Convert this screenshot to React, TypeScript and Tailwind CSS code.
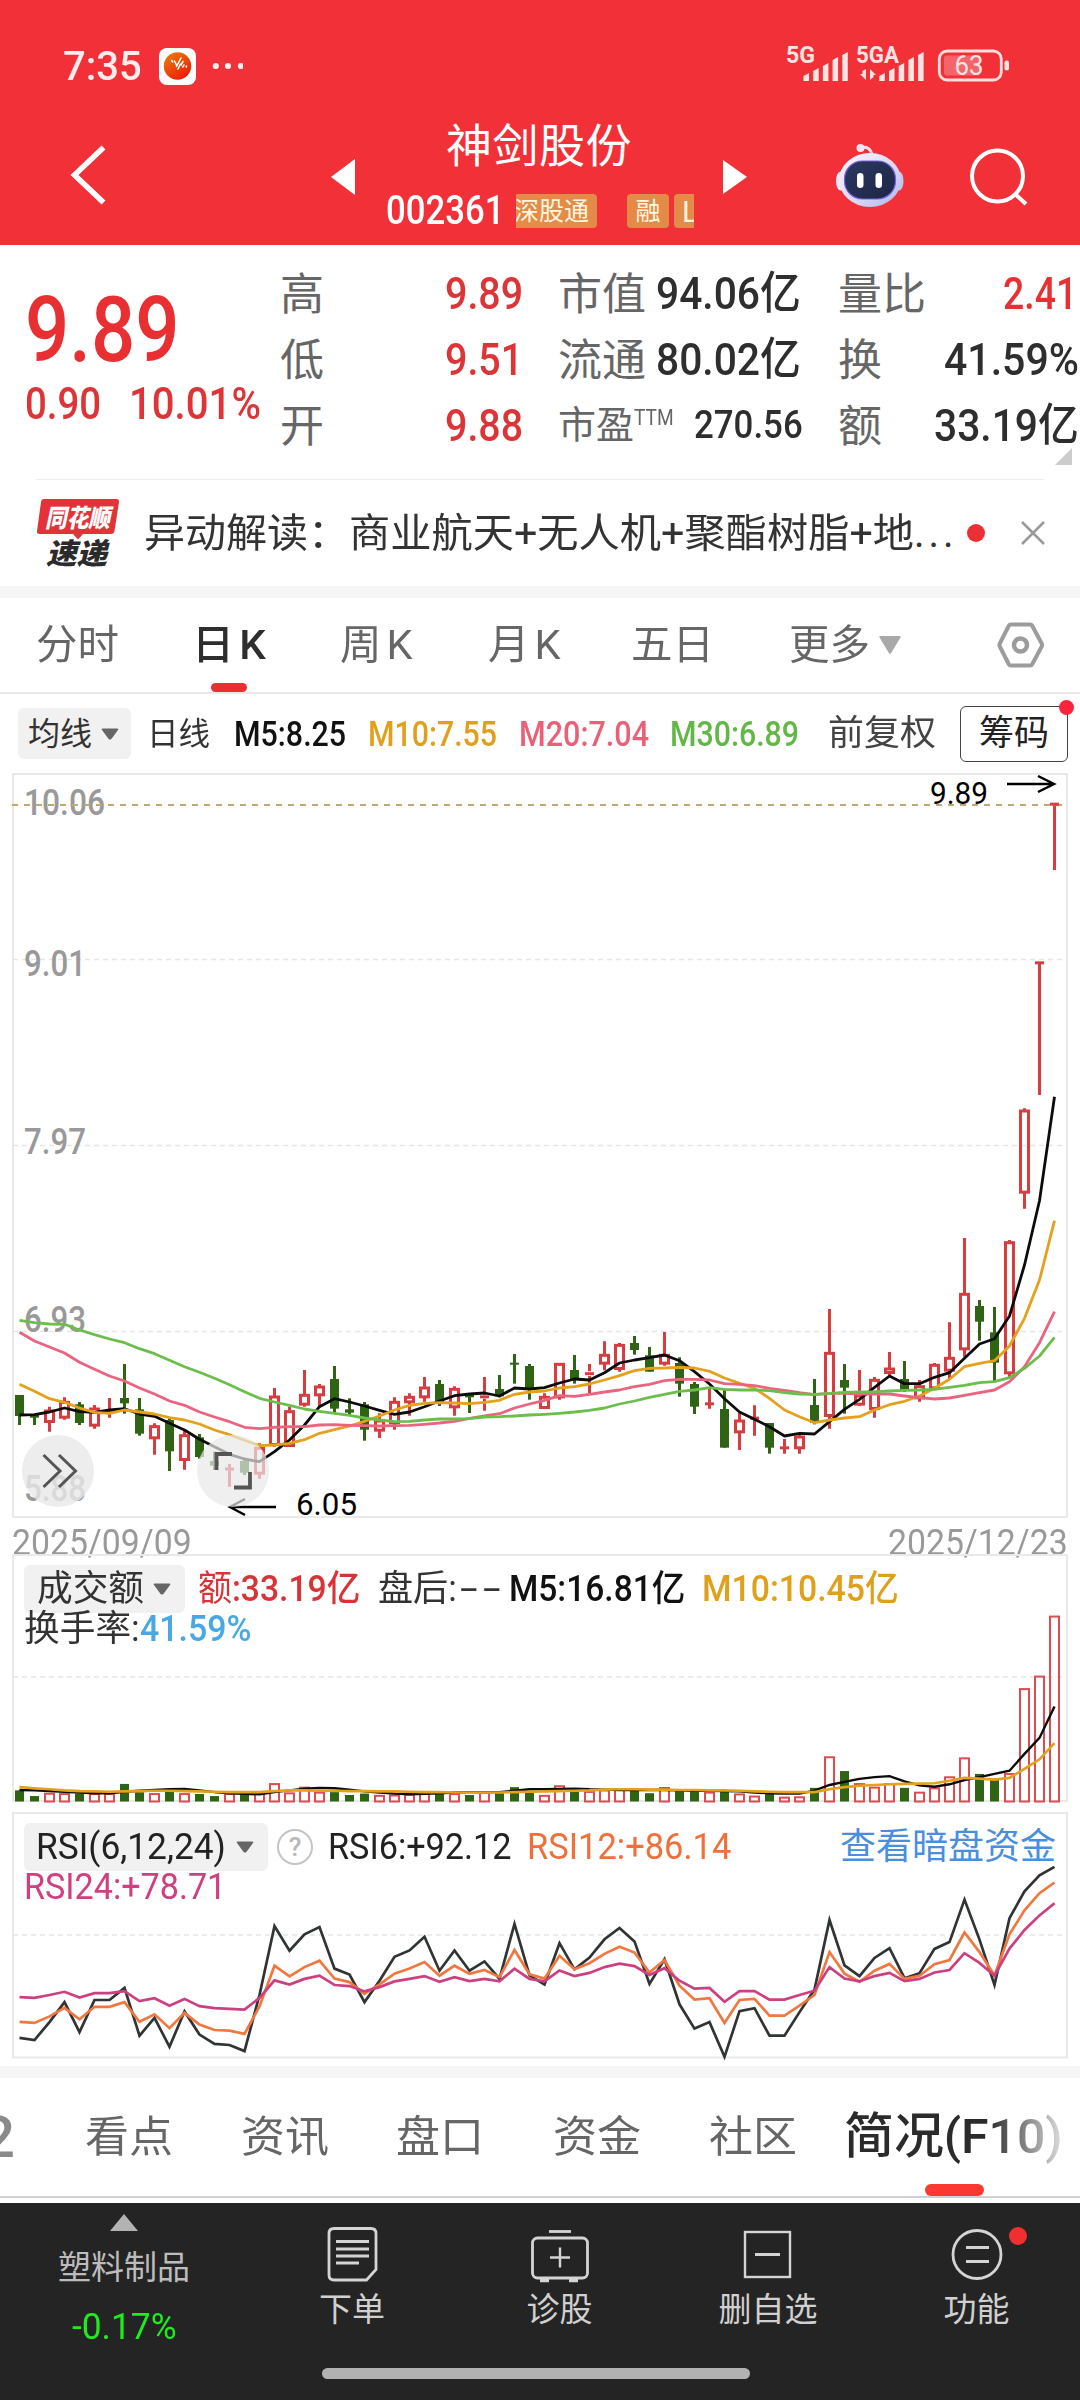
import React, { useLayoutEffect, useRef, useState } from "react";

type Candle = [up: number, high: number, top: number, bottom: number, low: number];

// daily candles, in chart units (3 units per pixel, 0 = y 1280)
const candles: Candle[] = [
  [0, 345, 345, 408, 435], [0, 403, 403, 413, 435], [1, 380, 390, 426, 455], [1, 352, 364, 413, 419],
  [0, 366, 373, 429, 435], [1, 375, 384, 437, 446], [1, 354, 388, 400, 413], [0, 252, 354, 370, 401],
  [0, 354, 388, 461, 467], [1, 430, 437, 475, 524], [0, 414, 420, 514, 573], [1, 450, 464, 540, 569],
  [0, 462, 472, 531, 536], [0, 515, 543, 557, 570], [1, 552, 563, 571, 620], [0, 535, 543, 578, 585],
  [1, 490, 502, 581, 596], [1, 324, 348, 495, 500], [1, 380, 392, 498, 500], [1, 270, 343, 374, 380],
  [1, 312, 318, 346, 378], [0, 258, 297, 386, 398], [0, 355, 388, 398, 404], [0, 366, 373, 449, 482],
  [1, 400, 420, 452, 474], [1, 352, 364, 430, 449], [1, 340, 349, 367, 407], [1, 291, 321, 352, 365],
  [0, 300, 312, 367, 378], [1, 319, 325, 382, 407], [0, 345, 345, 352, 399], [1, 291, 345, 356, 392],
  [0, 285, 327, 349, 352], [0, 222, 248, 254, 311], [0, 252, 258, 326, 359], [1, 340, 349, 384, 386],
  [1, 249, 250, 352, 359], [0, 225, 270, 297, 311], [1, 252, 274, 288, 340], [1, 184, 223, 251, 271],
  [1, 189, 193, 267, 275], [0, 168, 189, 210, 224], [0, 201, 226, 275, 275], [1, 156, 223, 251, 257],
  [0, 232, 249, 311, 350], [0, 306, 312, 380, 402], [1, 325, 368, 375, 386], [0, 330, 387, 503, 503],
  [1, 398, 420, 457, 510], [1, 376, 411, 418, 467], [0, 429, 429, 503, 521], [1, 477, 500, 507, 521],
  [1, 465, 468, 505, 521], [0, 297, 375, 429, 433], [1, 87, 217, 408, 446], [0, 252, 300, 323, 401],
  [1, 270, 345, 374, 377], [1, 291, 298, 387, 413], [1, 216, 264, 279, 287], [0, 243, 297, 330, 336],
  [1, 300, 317, 355, 365], [1, 249, 253, 325, 330], [1, 127, 232, 272, 300], [1, -126, 40, 208, 230],
  [0, 60, 78, 125, 182], [0, 81, 157, 248, 303], [1, -120, -115, 280, 295], [1, -515, -510, -262, -214],
  [1, -955, -955, -948, -555], [1, -1431, -1431, -1424, -1230],
];

const ma5 = [
  405, 404, 396, 384, 395, 397, 390, 386, 402, 409, 430, 450, 478, 500, 523, 537, 545, 515, 480, 435, 380, 356, 366,
  378, 391, 403, 396, 380, 363, 347, 342, 339, 348, 324, 327, 323, 309, 297, 300, 278, 249, 240, 233, 225, 242, 275,
  312, 356, 396, 418, 440, 468, 460, 462, 425, 388, 358, 322, 288, 311, 311, 292, 278, 235, 192, 176, 108, -45, -238, -550,
];
const ma10 = [
  313, 334, 356, 367, 384, 397, 400, 390, 396, 402, 413, 420, 432, 450, 464, 481, 497, 495, 490, 479, 460, 449, 438,
  424, 408, 390, 376, 370, 368, 369, 371, 367, 361, 343, 336, 333, 324, 320, 312, 300, 287, 272, 265, 264, 262, 264,
  274, 294, 310, 325, 355, 390, 410, 428, 420, 414, 410, 390, 374, 364, 348, 325, 298, 260, 250, 242, 198, 115, 0, -178,
];
const ma20 = [
  157, 183, 201, 219, 247, 268, 288, 303, 324, 342, 363, 376, 396, 411, 425, 442, 446, 442, 440, 440, 435, 434, 436,
  437, 438, 437, 436, 433, 429, 424, 415, 408, 401, 384, 372, 361, 347, 349, 343, 336, 330, 320, 313, 302, 298, 298,
  300, 311, 313, 317, 325, 331, 338, 344, 340, 340, 342, 342, 342, 348, 353, 357, 354, 346, 338, 330, 305, 260, 188, 95,
];
const ma30 = [
  121, 128, 132, 133, 150, 164, 177, 188, 206, 221, 241, 260, 277, 295, 314, 335, 355, 366, 376, 387, 394, 400, 406,
  414, 420, 425, 424, 420, 417, 417, 416, 411, 410, 408, 405, 403, 400, 396, 391, 384, 372, 363, 352, 343, 334, 330,
  323, 328, 330, 330, 332, 338, 342, 343, 340, 337, 336, 335, 333, 331, 330, 328, 322, 316, 308, 305, 293, 265, 228, 172,
];

// tops of the turnover bars, 2.8 units per pixel, 0 = y 1520
const volumes = [
  757, 773, 765, 766, 766, 766, 766, 739, 762, 766, 760, 766, 767, 773, 766, 765, 766, 738, 764, 748, 762, 762, 770,
  766, 771, 770, 768, 766, 766, 766, 770, 762, 765, 748, 762, 771, 744, 760, 760, 756, 752, 758, 765, 749, 757, 757,
  762, 760, 767, 773, 765, 776, 775, 750, 663, 703, 738, 748, 738, 750, 762, 750, 719, 666, 711, 724, 710, 472, 437, 269,
];
const vol5 = [
  756, 757, 759, 761, 763, 765, 765, 761, 758, 756, 754, 753, 757, 762, 765, 767, 768, 762, 757, 752, 750, 751, 755,
  760, 763, 766, 768, 767, 765, 763, 762, 762, 762, 758, 754, 754, 753, 752, 754, 755, 756, 756, 756, 756, 757, 758,
  758, 759, 760, 763, 765, 766, 766, 758, 742, 733, 725, 720, 717, 732, 743, 747, 740, 728, 720, 711, 702, 655, 610, 522,
];
const vol10 = [
  748, 751, 754, 757, 759, 760, 761, 760, 759, 758, 758, 759, 760, 761, 762, 762, 762, 759, 757, 757, 758, 758, 759,
  759, 760, 760, 761, 762, 762, 763, 763, 763, 763, 762, 761, 760, 759, 758, 757, 755, 754, 754, 755, 755, 756, 756,
  757, 757, 758, 760, 761, 762, 762, 762, 754, 748, 744, 742, 740, 739, 738, 737, 730, 722, 724, 727, 722, 697, 670, 625,
];

const rsi6 = [
  1450, 1456, 1406, 1350, 1434, 1344, 1344, 1310, 1444, 1394, 1475, 1376, 1441, 1467, 1470, 1487, 1330, 1137, 1206,
  1160, 1140, 1256, 1273, 1350, 1290, 1223, 1205, 1167, 1262, 1205, 1262, 1236, 1285, 1131, 1275, 1301, 1185, 1258,
  1225, 1174, 1142, 1180, 1299, 1230, 1356, 1424, 1406, 1503, 1375, 1367, 1444, 1444, 1378, 1315, 1120, 1247, 1277,
  1226, 1199, 1283, 1269, 1201, 1182, 1063, 1175, 1302, 1115, 1040, 995, 971,
];
const rsi12 = [
  1405, 1408, 1390, 1366, 1398, 1363, 1363, 1350, 1405, 1384, 1423, 1380, 1413, 1428, 1430, 1439, 1362, 1248, 1278,
  1252, 1234, 1284, 1294, 1327, 1300, 1270, 1256, 1238, 1276, 1248, 1271, 1260, 1280, 1204, 1272, 1284, 1220, 1258,
  1241, 1215, 1195, 1211, 1267, 1232, 1304, 1343, 1339, 1408, 1344, 1341, 1388, 1388, 1360, 1330, 1210, 1270, 1293,
  1262, 1243, 1285, 1276, 1244, 1232, 1155, 1210, 1275, 1160, 1093, 1045, 1015,
];
const rsi24 = [
  1336, 1338, 1330, 1321, 1337, 1325, 1325, 1319, 1347, 1339, 1360, 1341, 1361, 1367, 1369, 1371, 1338, 1289, 1301,
  1285, 1276, 1302, 1305, 1320, 1308, 1292, 1285, 1277, 1293, 1280, 1291, 1285, 1292, 1256, 1285, 1292, 1261, 1277,
  1268, 1252, 1242, 1249, 1274, 1255, 1290, 1312, 1310, 1349, 1319, 1319, 1343, 1343, 1330, 1318, 1252, 1284, 1292,
  1277, 1268, 1291, 1285, 1267, 1260, 1213, 1240, 1276, 1200, 1148, 1107, 1073,
];

const RED = "#d63c40";
const GREEN = "#2f6414";

const xAt = (i: number) => 19.5 + i * 15;
const yPrice = (v: number) => 1280 + v / 3;
const ySub = (v: number) => 1520 + v / 2.8;
const line = (data: number[], y: (v: number) => number) =>
  data.map((v, i) => `${xAt(i).toFixed(1)},${y(v).toFixed(1)}`).join(" ");

// squeezes a run of text into the width of its box
function Fit({ className, children }: { className: string; children: React.ReactNode }) {
  const box = useRef<HTMLSpanElement>(null);
  const text = useRef<HTMLSpanElement>(null);
  const [scale, setScale] = useState(1);

  useLayoutEffect(() => {
    if (box.current && text.current) {
      setScale(box.current.clientWidth / text.current.offsetWidth);
    }
  }, []);

  return (
    <span ref={box} className={`block shrink-0 whitespace-nowrap ${className}`}>
      <span ref={text} className="inline-block origin-left" style={{ transform: `scaleX(${scale})` }}>
        {children}
      </span>
    </span>
  );
}

function Caret({ className = "text-[#666]" }: { className?: string }) {
  return (
    <svg width="18" height="12" viewBox="0 0 18 12" className={`shrink-0 ${className}`}>
      <path d="M2 0.5h14q2 0 1 1.6l-6.6 8.8q-1.4 1.4-2.8 0L1 2.1Q0 .5 2 .5z" fill="currentColor" />
    </svg>
  );
}

function StatusBar() {
  const bars = [8, 13, 18, 24, 29];
  return (
    <div className="flex h-[120px] items-center pt-3 pl-[63px] pr-[70px]">
      <Fit className="w-[79px] text-[41px] font-medium leading-none text-[#ffecec]">7:35</Fit>
      <svg width="84" height="38" viewBox="159 47 84 38" className="ml-[17px]">
        <defs>
          <linearGradient id="app" x1="0" y1="0" x2="0.7" y2="1">
            <stop offset="0" stopColor="#e8860c" />
            <stop offset="1" stopColor="#f01808" />
          </linearGradient>
        </defs>
        <rect x="159" y="48" width="37" height="37" rx="8" fill="#fff" />
        <circle cx="177.5" cy="66" r="13.7" fill="url(#app)" />
        <path
          d="M171.7 60.5l1 1.5M174.5 61l2 4M176.5 66.5l4.5-8.5M178 69l2.5-5M181 65l2-3.5M183 67l1-2M186.4 66v1"
          stroke="#fff" strokeWidth="1.6" strokeLinecap="round"
        />
        <circle cx="215.8" cy="66" r="3.1" fill="#ffecec" />
        <circle cx="228" cy="66" r="3.1" fill="#ffecec" />
        <circle cx="241" cy="66" r="3.1" fill="#ffecec" />
      </svg>
      <svg width="226" height="44" viewBox="784 44 226 44" className="ml-auto" fill="#ffe4e4">
        <text x="786" y="63" fontSize="23" fontWeight="700" textLength="29" lengthAdjust="spacingAndGlyphs">5G</text>
        <text x="856" y="63" fontSize="23" fontWeight="700" textLength="43" lengthAdjust="spacingAndGlyphs">5GA</text>
        {bars.map((h, i) => (
          <React.Fragment key={h}>
            <path d={`M${803.5 + i * 9.7} 81v${-h + 3}l5.5-3v${h}z`} />
            <path d={`M${879.3 + i * 9.7} 81v${-h + 3}l5.5-3v${h}z`} />
          </React.Fragment>
        ))}
        <path d="M866 69v11l-6-6h2.5v-3zM870 80V69l6 6h-2.5v2z" />
        <rect x="939.3" y="51" width="62" height="29" rx="8" fill="none" stroke="#ffdede" strokeWidth="2.8" />
        <rect x="944" y="55.5" width="36" height="20" rx="3" fill="#fff" fillOpacity="0.25" />
        <rect x="1004.5" y="60.5" width="4.5" height="10" rx="2" />
        <text x="954.5" y="75" fontSize="27" textLength="29" lengthAdjust="spacingAndGlyphs">63</text>
      </svg>
    </div>
  );
}

function Robot() {
  return (
    <svg width="70" height="66" viewBox="0 0 70 66">
      <defs>
        <linearGradient id="shell" x1="0" y1="0" x2="1" y2="1">
          <stop offset="0" stopColor="#fdf6fd" />
          <stop offset="0.6" stopColor="#d9d6f6" />
          <stop offset="1" stopColor="#a8b4ea" />
        </linearGradient>
        <linearGradient id="face" x1="0" y1="0" x2="1" y2="1">
          <stop offset="0" stopColor="#2b3860" />
          <stop offset="1" stopColor="#1c2646" />
        </linearGradient>
      </defs>
      <path d="M25 6q10-3 12 7" fill="none" stroke="#f6dfee" strokeWidth="3" />
      <circle cx="25.5" cy="6" r="4" fill="#f8e4f0" />
      <ellipse cx="5.5" cy="39" rx="4.5" ry="9.5" fill="#e9e6fb" />
      <ellipse cx="64" cy="39" rx="4.5" ry="9.5" fill="#c3c8f3" />
      <ellipse cx="35" cy="38" rx="31" ry="27" fill="url(#shell)" />
      <rect x="9.5" y="19" width="51" height="38" rx="18" fill="url(#face)" stroke="#7a5fe0" strokeWidth="1.2" />
      <rect x="22" y="31" width="6.5" height="15" rx="3.2" fill="#fff" />
      <rect x="40.5" y="31" width="6.5" height="15" rx="3.2" fill="#fff" />
    </svg>
  );
}

function Header() {
  return (
    <header className="h-[245px] bg-[#f23038] text-white">
      <StatusBar />
      <div className="flex items-start">
        <svg width="38" height="64" viewBox="70 143 38 64" className="ml-[70px] mt-[23px]">
          <path d="M103.5 147.5L74.5 175l29 27.5" fill="none" stroke="#fff" strokeWidth="5.5" />
        </svg>
        <svg width="24" height="36" className="ml-[223px] mt-[39px]">
          <path d="M24 0v36L0 18z" fill="#fff" />
        </svg>
        <div className="w-[368px]">
          <h1 className="h-[50px] pl-[91px] text-[46px] leading-[53px] tracking-[0.5px]">神剑股份</h1>
          <div className="mt-6 flex h-[34px] items-center pl-[31px]">
            <Fit className="w-[118px] text-[40px] font-medium leading-[36px]">002361</Fit>
            <div className="ml-[12px] flex w-[178px] overflow-hidden whitespace-nowrap text-[25px] leading-[36px] text-[#fff6e0]">
              <span className="flex h-[34px] w-[81px] shrink-0 justify-end overflow-hidden rounded-r bg-[#e58b48] pr-2">深股通</span>
              <span className="ml-[30px] h-[34px] w-[42px] shrink-0 rounded bg-[#e58b48] text-center">融</span>
              <span className="ml-[5px] h-[34px] w-[42px] shrink-0 rounded bg-[#e58b48] pl-[8px] text-[30px]">L</span>
            </div>
          </div>
        </div>
        <svg width="24" height="36" className="mt-[39px]">
          <path d="M0 1v34l24-17z" fill="#fff" />
        </svg>
        <div className="ml-[88px] mt-[22px]">
          <Robot />
        </div>
        <svg width="62" height="64" viewBox="968 146 62 64" className="ml-[63px] mt-[26px]" fill="none" stroke="#fff">
          <circle cx="997.5" cy="176" r="25.5" strokeWidth="4" />
          <path d="M1015 194l11 10" strokeWidth="4" />
        </svg>
      </div>
    </header>
  );
}

const num = "text-[45px] leading-[67px] font-medium";
const key = "text-[44px] leading-[70px]";

function Quote() {
  return (
    <section className="flex h-[234px]">
      <div className="w-[280px] shrink-0 pl-[25px] pt-[42px] text-[#e83033]">
        <Fit className="w-[154px] text-[90px] font-medium leading-[88px]">9.89</Fit>
        <div className="mt-[4px] flex text-[45px] font-medium leading-[50px] text-[#dc3437]">
          <Fit className="w-[76px]">0.90</Fit>
          <Fit className="ml-[28px] w-[132px]">10.01%</Fit>
        </div>
      </div>
      <div className="w-[243px] pt-[15px] text-[#666]">
        {[["高", "9.89"], ["低", "9.51"], ["开", "9.88"]].map(([k, v]) => (
          <div key={k} className="flex h-[66px] justify-between">
            <span className={key}>{k}</span>
            <Fit className={`w-[78px] text-[#dc3437] ${num}`}>{v}</Fit>
          </div>
        ))}
      </div>
      <div className="ml-[35px] w-[243px] pt-[15px] text-[#666]">
        {[["市值", "94.06亿"], ["流通", "80.02亿"]].map(([k, v]) => (
          <div key={k} className="flex h-[66px] justify-between">
            <span className={key}>{k}</span>
            <Fit className={`w-[145px] text-[#2e2e2e] ${num}`}>{v}</Fit>
          </div>
        ))}
        <div className="flex h-[66px] items-center">
          <span className="text-[38px] leading-[66px]">市盈</span>
          <Fit className="-mt-[16px] w-[40px] text-[22px]">TTM</Fit>
          <Fit className="ml-auto mr-[-2px] w-[109px] text-[39px] font-medium text-[#2e2e2e]">270.56</Fit>
        </div>
      </div>
      <div className="relative ml-[37px] w-[241px] pt-[15px] text-[#666]">
        <div className="flex h-[66px] justify-between">
          <span className={key}>量比</span>
          <Fit className={`mr-[2px] w-[74px] text-[#e83033] ${num}`}>2.41</Fit>
        </div>
        <div className="flex h-[66px] justify-between">
          <span className={key}>换</span>
          <Fit className={`w-[135px] text-[#2e2e2e] ${num}`}>41.59%</Fit>
        </div>
        <div className="flex h-[66px] justify-between">
          <span className={key}>额</span>
          <Fit className={`w-[145px] text-[#2e2e2e] ${num}`}>33.19亿</Fit>
        </div>
        <svg width="17" height="17" className="absolute bottom-[14px] right-[7px]">
          <path d="M17 0v17H0z" fill="#ccc" />
        </svg>
      </div>
    </section>
  );
}

function News() {
  return (
    <section>
      <div className="ml-[36px] mr-[36px] h-px bg-[#ececec]" />
      <div className="flex h-[106px] items-center pl-[36px]">
        <svg width="84" height="70" viewBox="36 497 84 70" fontStyle="italic" fontWeight="900">
          <path
            d="M44 498h72.5q3 0 2.5 3l-4.5 29q-.5 3-3.5 3H83l-5 5.5-5-5.5H39.5q-3 0-2.5-3l4-29q.5-3 3-3z"
            fill="#e23438"
          />
          <text x="45" y="526" fontSize="25" fill="#fff" textLength="65" lengthAdjust="spacingAndGlyphs">同花顺</text>
          <text x="46" y="563" fontSize="29" fill="#2b2b2b" textLength="61" lengthAdjust="spacingAndGlyphs">速递</text>
        </svg>
        <div className="ml-[24px] flex w-[812px] text-[40px] leading-[63px] text-[#333]">
          <Fit className="w-[205px]">异动解读：</Fit>
          <Fit className="w-[565px]">商业航天+无人机+聚酯树脂+地</Fit>
          <Fit className="w-[44px] tracking-[4px]">...</Fit>
        </div>
        <span className="ml-[11px] size-[18px] rounded-full bg-[#ea3033]" />
        <svg width="24" height="24" className="ml-[36px]">
          <path d="M1 1l22 22M23 1L1 23" stroke="#999" strokeWidth="2.5" />
        </svg>
      </div>
    </section>
  );
}

function PeriodTabs() {
  return (
    <nav className="flex h-[96px] items-center border-b-2 border-[#e9e9e9] text-[41px] leading-[98px] text-[#666]">
      <Fit className="ml-[36px] w-[83px]">分时</Fit>
      <div className="relative ml-[73px]">
        <Fit className="w-[79px] font-medium tracking-[5px] text-[#2e2e2e]">日K</Fit>
        <span className="absolute bottom-[2px] left-[19px] h-[9px] w-[36px] rounded-full bg-[#e83033]" />
      </div>
      <Fit className="ml-[69px] w-[78px] tracking-[5px]">周K</Fit>
      <Fit className="ml-[70px] w-[78px] tracking-[5px]">月K</Fit>
      <Fit className="ml-[65px] w-[83px]">五日</Fit>
      <Fit className="ml-[75px] w-[81px]">更多</Fit>
      <svg width="22" height="18" viewBox="0 0 22 18" className="ml-[9px]">
        <path d="M1.5 0h19q2 0 .8 1.800l-9 15q-1.3 2-2.6 0l-9-15Q-.5 0 1.5 0z" fill="#a9a9a9" />
      </svg>
      <svg width="48" height="48" viewBox="0 0 48 48" className="ml-[96px]" fill="none" stroke="#9c9c9c">
        <path d="M14 3.5h19q1.5 0 2.2 1.3l9.5 17.7q.8 1.5 0 3l-9.5 17.7q-.7 1.3-2.2 1.3H14q-1.5 0-2.2-1.3L2.8 25.5q-.8-1.5 0-3l9-17.7q.7-1.3 2.2-1.3z" strokeWidth="4" />
        <circle cx="23.5" cy="24" r="6.5" strokeWidth="4.5" />
      </svg>
    </nav>
  );
}

function AverageLegend() {
  return (
    <div className="flex h-[79px] items-center pl-[18px] text-[35px] leading-[54px]">
      <button className="flex h-[51px] w-[113px] items-center rounded-md bg-[#f1f1f1] pl-[10px] text-[32px] text-[#333]">
        <span className="mr-[9px]">均线</span>
        <Caret />
      </button>
      <Fit className="ml-[16px] w-[63px] text-[32px] text-[#333]">日线</Fit>
      <Fit className="ml-[24px] w-[112px] pt-[3px] font-medium text-[#111]">M5:8.25</Fit>
      <Fit className="ml-[22px] w-[129px] pt-[3px] font-medium text-[#e0a01c]">M10:7.55</Fit>
      <Fit className="ml-[22px] w-[130px] pt-[3px] font-medium text-[#ea6078]">M20:7.04</Fit>
      <Fit className="ml-[21px] w-[129px] pt-[3px] font-medium text-[#62b846]">M30:6.89</Fit>
      <Fit className="ml-[29px] w-[108px] text-[#444]">前复权</Fit>
      <button className="relative ml-[24px] flex h-[56px] w-[108px] items-center justify-center rounded-md border border-[#444] text-[35px] text-[#222]">
        筹码
        <span className="absolute -right-[7px] -top-[7px] size-[15px] rounded-full bg-[#fa2538]" />
      </button>
    </div>
  );
}

const priceLabels = [
  { text: "10.06", y: 815, w: 81 },
  { text: "9.01", y: 976, w: 62 },
  { text: "7.97", y: 1154, w: 62 },
  { text: "6.93", y: 1332, w: 62 },
  { text: "5.88", y: 1501, w: 62 },
];

function PriceChart() {
  return (
    <svg width="1080" height="745" viewBox="0 773 1080 745" className="block" fill="none">
      <rect x="13" y="774" width="1054" height="743" stroke="#e9e9e9" strokeWidth="2" />
      {[959.5, 1145.5, 1331.5].map((y) => (
        <path key={y} d={`M13 ${y}H1066`} stroke="#e6e6e6" strokeWidth="1.5" strokeDasharray="5 4" />
      ))}
      {priceLabels.map((l) => (
        <text key={l.text} x="24" y={l.y} fontSize="37" fontWeight="500" fill="#999" textLength={l.w} lengthAdjust="spacingAndGlyphs">
          {l.text}
        </text>
      ))}
      <path d="M12 805H1062" stroke="#bda878" strokeWidth="2" strokeDasharray="6 6" />

      {candles.map(([up, high, top, bottom, low], i) => {
        const x = xAt(i);
        const t = yPrice(top);
        const b = yPrice(bottom);
        if (!up) {
          return (
            <g key={i} fill={GREEN}>
              <rect x={x - 1.5} y={yPrice(high)} width="3" height={(low - high) / 3} />
              <rect x={x - 4.5} y={t} width="9" height={Math.max(b - t, 2)} />
            </g>
          );
        }
        return (
          <g key={i} stroke={RED} strokeWidth="3">
            <path d={`M${x} ${yPrice(high)}V${t}M${x} ${b}V${yPrice(low)}`} />
            {b - t < 5 ? (
              <path d={`M${x - 4.5} ${(t + b) / 2}h9`} />
            ) : (
              <rect x={x - 4} y={t + 1} width="8" height={b - t - 1.5} />
            )}
          </g>
        );
      })}

      <g strokeWidth="2.8" strokeLinejoin="round">
        <polyline points={line(ma5, yPrice)} stroke="#0c0c0c" />
        <polyline points={line(ma10, yPrice)} stroke="#e3a11c" />
        <polyline points={line(ma20, yPrice)} stroke="#ea6480" />
        <polyline points={line(ma30, yPrice)} stroke="#6cbe4c" />
      </g>

      <g fill="#000">
        <text x="930" y="804" fontSize="31" textLength="58" lengthAdjust="spacingAndGlyphs">9.89</text>
        <text x="296" y="1515" fontSize="32" textLength="61" lengthAdjust="spacingAndGlyphs">6.05</text>
      </g>
      <path d="M1007 784h46M1038 776l16 8-16 8M276 1507h-45M245 1499l-15 8 15 8" stroke="#000" strokeWidth="2.5" />

      <circle cx="58" cy="1471" r="36" fill="#e8e8e8" fillOpacity="0.8" />
      <circle cx="233" cy="1471" r="36" fill="#e8e8e8" fillOpacity="0.7" />
      <g stroke="#555">
        <path d="M43.5 1455l16.5 16-16.5 16M59 1455l16.5 16-16.5 16" strokeWidth="3" />
        <path d="M232 1454h-15.5v16M250 1472v15.5h-16" strokeWidth="3.8" />
      </g>
    </svg>
  );
}

function VolumePanel() {
  return (
    <section className="relative h-[258px]">
      <svg width="1080" height="258" viewBox="0 1554 1080 258" className="absolute inset-0" fill="none">
        <rect x="13" y="1555" width="1054" height="246" stroke="#e9e9e9" strokeWidth="2" />
        <path d="M13 1677H1066" stroke="#e6e6e6" strokeWidth="1.5" strokeDasharray="5 4" />
        {volumes.map((v, i) =>
          candles[i][0] ? (
            <rect key={i} x={xAt(i) - 4.5} y={ySub(v) + 0.5} width="9" height={1801 - ySub(v)} stroke="#dc4c50" strokeWidth="2" />
          ) : (
            <rect key={i} x={xAt(i) - 4.5} y={ySub(v)} width="9" height={1801.5 - ySub(v)} fill={GREEN} />
          )
        )}
        <polyline points={line(vol5, ySub)} stroke="#0c0c0c" strokeWidth="2.4" />
        <polyline points={line(vol10, ySub)} stroke="#e3a11c" strokeWidth="2.6" />
      </svg>
      <div className="relative pl-6 pt-[11px] text-[36px] leading-[50px]">
        <div className="flex h-[48px] items-center">
          <button className="flex h-[48px] w-[161px] items-center rounded-md bg-[#f1f1f1] pl-[13px] text-[#333]">
            <Fit className="mr-[9px] w-[107px]">成交额</Fit>
            <Caret />
          </button>
          <Fit className="ml-[13px] w-[34px] text-[#d83438]">额</Fit>
          <Fit className="w-[128px] font-medium text-[#d83438]">:33.19亿</Fit>
          <Fit className="ml-[18px] w-[79px] text-[#333]">盘后:</Fit>
          <Fit className="ml-[3px] w-[46px] tracking-[3px] text-[#333]">--</Fit>
          <Fit className="ml-[3px] w-[176px] font-medium text-[#111]">M5:16.81亿</Fit>
          <Fit className="ml-[17px] w-[197px] font-medium text-[#e0a01c]">M10:10.45亿</Fit>
        </div>
        <div className="-mt-[9px] flex">
          <Fit className="w-[116px] text-[#333]">换手率:</Fit>
          <Fit className="w-[111px] font-medium text-[#48a8e4]">41.59%</Fit>
        </div>
      </div>
    </section>
  );
}

function RsiPanel() {
  return (
    <section className="relative h-[254px]">
      <svg width="1080" height="254" viewBox="0 1812 1080 254" className="absolute inset-0" fill="none">
        <rect x="13" y="1813" width="1054" height="244.5" stroke="#e9e9e9" strokeWidth="2" />
        <path d="M13 1935H1066" stroke="#e6e6e6" strokeWidth="1.5" strokeDasharray="5 4" />
        <polyline points={line(rsi6, ySub)} stroke="#303434" strokeWidth="2.7" />
        <polyline points={line(rsi12, ySub)} stroke="#f07840" strokeWidth="2.7" />
        <polyline points={line(rsi24, ySub)} stroke="#cc4080" strokeWidth="2.7" />
      </svg>
      <div className="relative pl-6 pt-[11px] text-[37px] leading-[48px]">
        <div className="flex h-[48px] items-center">
          <button className="flex h-[48px] w-[244px] items-center rounded-md bg-[#f1f1f1] pl-[12px] text-[#222]">
            <Fit className="mr-[10px] w-[190px]">RSI(6,12,24)</Fit>
            <Caret />
          </button>
          <span className="ml-[9px] flex size-[36px] items-center justify-center rounded-full border-[2.5px] border-[#c4c4c4] text-[26px] font-medium leading-none text-[#b8b8b8]">
            ?
          </span>
          <Fit className="ml-[15px] w-[184px] text-[#222]">RSI6:+92.12</Fit>
          <Fit className="ml-[15px] w-[204px] text-[#f0703c]">RSI12:+86.14</Fit>
          <Fit className="ml-[109px] w-[216px] text-[36px] text-[#4a8ede]">查看暗盘资金</Fit>
        </div>
        <Fit className="-mt-[8px] w-[202px] text-[#cf4080]">RSI24:+78.71</Fit>
      </div>
    </section>
  );
}

function SectionTabs() {
  return (
    <nav className="h-[125px] overflow-hidden text-[43px] leading-[122px] text-[#666]">
      <div className="flex h-[120px] items-center border-b-2 border-[#d0d0d0]">
        <span className="flex w-[15px] shrink-0 justify-end overflow-hidden text-[58px] font-medium text-[#8a8a8a]">2</span>
        <Fit className="ml-[70px] w-[88px]">看点</Fit>
        <Fit className="ml-[68px] w-[88px]">资讯</Fit>
        <Fit className="ml-[67px] w-[88px]">盘口</Fit>
        <Fit className="ml-[69px] w-[88px]">资金</Fit>
        <Fit className="ml-[68px] w-[88px]">社区</Fit>
        <div className="relative ml-[47px]">
          <Fit className="w-[219px] text-[49px] font-medium text-[#2b2b2b] [mask-image:linear-gradient(to_right,#000_66%,rgba(0,0,0,0.2)_98%)]">
            简况(F10)
          </Fit>
          <span className="absolute bottom-[2px] left-[81px] h-[12px] w-[59px] rounded-full bg-[#fa3a32]" />
        </div>
      </div>
    </nav>
  );
}

function BottomBar() {
  return (
    <footer className="h-[197px] bg-[#242424] text-[33px] text-[#d0d0d0]">
      <div className="flex h-[165px]">
        <div className="flex w-[248px] flex-col items-center">
          <svg width="28" height="17" className="mt-[11px]">
            <path d="M14 0l14 17H0z" fill="#b3b3b3" />
          </svg>
          <span className="mt-[17px] leading-[40px] text-[#bcbcbc]">塑料制品</span>
          <Fit className="mt-[17px] w-[105px] text-[36px] leading-[44px] text-[#1fec1f]">-0.17%</Fit>
        </div>
        <div className="flex w-[208px] flex-col items-center">
          <svg width="52" height="58" viewBox="326 2225 52 58" className="mt-[22px]" fill="none" stroke="#d4d4d4" strokeWidth="2.8">
            <path d="M334 2228.5h37q5 0 5 5v36l-9.5 10.5H334q-5 0-5-5v-41.5q0-5 5-5z" />
            <path d="M336 2241.5h33M336 2249h33M336 2256h33M336 2263h23" />
          </svg>
          <span className="mt-[7px] leading-[40px]">下单</span>
        </div>
        <div className="flex w-[207px] flex-col items-center">
          <svg width="60" height="58" viewBox="530 2225 60 58" className="mt-[22px]" fill="none" stroke="#d4d4d4" strokeWidth="2.8">
            <path d="M549 2231.5h22" />
            <rect x="532.5" y="2238" width="55" height="40" rx="5" />
            <path d="M550 2257.5h20M560 2247.5v20" strokeWidth="2.4" />
            <path d="M540 2280.5h9M569 2280.5h9" strokeWidth="3.5" />
          </svg>
          <span className="mt-[7px] leading-[40px]">诊股</span>
        </div>
        <div className="flex w-[210px] flex-col items-center">
          <svg width="50" height="58" viewBox="743 2225 50 58" className="mt-[22px]" fill="none" stroke="#d4d4d4">
            <rect x="745" y="2232" width="45" height="45" strokeWidth="2.4" />
            <path d="M755 2254.5h25" strokeWidth="3" />
          </svg>
          <span className="mt-[7px] leading-[40px]">删自选</span>
        </div>
        <div className="relative flex w-[207px] flex-col items-center">
          <svg width="54" height="58" viewBox="948 2225 54 58" className="mt-[22px]" fill="none" stroke="#d4d4d4">
            <circle cx="975" cy="2254.5" r="24" strokeWidth="2.8" />
            <path d="M964 2247.5h23M964 2261.5h23" strokeWidth="3" />
          </svg>
          <span className="mt-[7px] leading-[40px]">功能</span>
          <span className="absolute left-[136px] top-[24px] size-[18px] rounded-full bg-[#f03030]" />
        </div>
      </div>
      <div className="ml-[322px] h-[11px] w-[428px] rounded-full bg-[#b2b2b2]" />
    </footer>
  );
}

export default function App() {
  return (
    <div className="h-[2400px] w-[1080px] overflow-hidden bg-white font-['Roboto','Noto_Sans_CJK_SC',sans-serif]">
      <Header />
      <Quote />
      <News />
      <div className="h-[12px] bg-[#f5f5f5]" />
      <PeriodTabs />
      <AverageLegend />
      <PriceChart />
      <div className="flex h-[36px] justify-between pl-[12px] pr-[12px] text-[36px] leading-[50px] text-[#999]">
        <Fit className="w-[180px]">2025/09/09</Fit>
        <Fit className="w-[180px]">2025/12/23</Fit>
      </div>
      <VolumePanel />
      <RsiPanel />
      <div className="h-[12px] bg-[#f5f5f5]" />
      <SectionTabs />
      <BottomBar />
    </div>
  );
}
